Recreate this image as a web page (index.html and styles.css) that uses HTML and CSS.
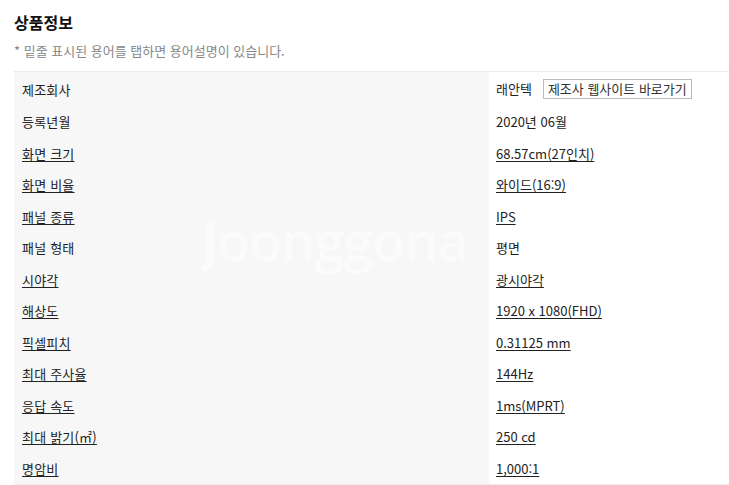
FILE: index.html
```html
<!DOCTYPE html>
<html lang="ko">
<head>
<meta charset="utf-8">
<link rel="stylesheet" href="styles.css">
</head>
<body>
<section class="info">
  <h2 class="title">상품정보</h2>
  <p class="note">* 밑줄 표시된 용어를 탭하면 용어설명이 있습니다.</p>
  <div class="table-wrap">
    <table class="spec">
      <tr class="first"><th>제조회사</th><td>래안텍<span class="btn">제조사 웹사이트 바로가기</span></td></tr>
      <tr><th>등록년월</th><td>2020년 06월</td></tr>
      <tr><th><u>화면 크기</u></th><td><u>68.57cm(27인치)</u></td></tr>
      <tr><th><u>화면 비율</u></th><td><u>와이드(16:9)</u></td></tr>
      <tr><th><u>패널 종류</u></th><td><u>IPS</u></td></tr>
      <tr><th>패널 형태</th><td>평면</td></tr>
      <tr><th><u>시야각</u></th><td><u>광시야각</u></td></tr>
      <tr><th><u>해상도</u></th><td><u>1920 x 1080(FHD)</u></td></tr>
      <tr><th><u>픽셀피치</u></th><td><u>0.31125 mm</u></td></tr>
      <tr><th><u>최대 주사율</u></th><td><u>144Hz</u></td></tr>
      <tr><th><u>응답 속도</u></th><td><u>1ms(MPRT)</u></td></tr>
      <tr><th><u>최대 밝기(㎡)</u></th><td><u>250 cd</u></td></tr>
      <tr><th><u>명암비</u></th><td><u>1,000:1</u></td></tr>
    </table>
    <div class="watermark">Joonggona</div>
  </div>
</section>
</body>
</html>
```

FILE: styles.css
```css
html, body {
  margin: 0;
  padding: 0;
  background: #fff;
}
body {
  font-family: "Noto Sans CJK KR", "Noto Sans", sans-serif;
  color: #222;
}
.info {
  padding-left: 14px;
}
.title {
  margin: 0;
  padding-top: 11px;
  font-size: 16px;
  line-height: 22px;
  font-weight: bold;
  color: #111;
}
.note {
  margin: 0;
  padding-top: 9px;
  font-size: 13px;
  letter-spacing: 0;
  line-height: 18px;
  color: #888;
  height: 29px;
}
.table-wrap {
  position: relative;
  overflow: hidden;
}
.spec {
  width: 100%;
  border-collapse: collapse;
  border-top: 1px solid #ececec;
  border-bottom: 1px solid #ececec;
  font-size: 13px;
  line-height: 19px;
}
.spec th {
  width: 475px;
  box-sizing: border-box;
  background: #f7f7f7;
  text-align: left;
  font-weight: normal;
  padding: 0 8px;
  height: 31.5px;
  letter-spacing: 0.2px;
}
.spec td {
  padding: 0 7px;
  height: 31.5px;
}
.spec tr.first th, .spec tr.first td {
  height: 34px;
}
.spec u {
  text-decoration: underline;
  text-underline-offset: 2px;
}
.btn {
  display: inline-block;
  margin-left: 11px;
  padding: 0 4px;
  border: 1px solid #bbb;
  line-height: 18px;
  color: #333;
}
.watermark {
  position: absolute;
  left: 188px;
  top: 132px;
  font-family: "Open Sans", sans-serif;
  font-size: 54px;
  font-weight: 600;
  letter-spacing: -1px;
  color: rgba(255, 255, 255, 0.5);
  pointer-events: none;
  width: 287px;
  overflow: hidden;
  white-space: nowrap;
}
```
